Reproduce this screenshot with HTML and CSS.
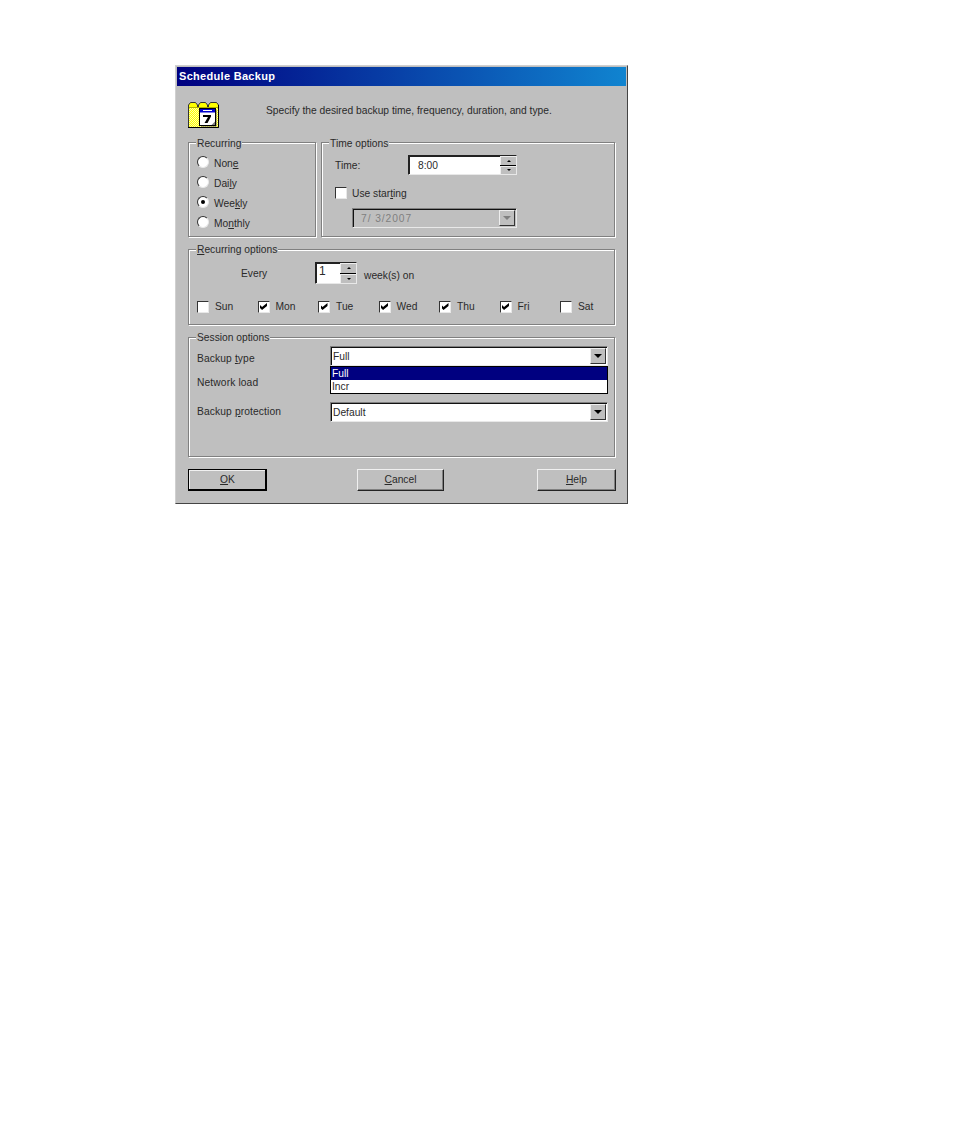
FILE: index.html
```
<!DOCTYPE html>
<html lang="en">
<head>
<meta charset="utf-8">
<title>Schedule Backup</title>
<link rel="stylesheet" href="styles.css">
</head>
<body>
<div class="window">
  <div class="titlebar">Schedule Backup</div>
  <div class="content">
    <div class="intro">
      <svg class="cal-icon" width="32" height="28" viewBox="0 0 32 28">
        <defs>
          <pattern id="dither" width="2" height="2" patternUnits="userSpaceOnUse">
            <rect width="2" height="2" fill="#ffff00"/>
            <rect width="1" height="1" fill="#ffffb0"/>
            <rect x="1" y="1" width="1" height="1" fill="#ffffb0"/>
          </pattern>
        </defs>
        <path d="M0.5 27.5 V5 L2.5 2.5 H7.5 L9.5 5 V7 H10.5 V5 L12.5 2.5 H17.5 L19.5 5 V7 H20.5 V5 L22.5 2.5 H28.5 L30.5 5 V27.5 Z" fill="#ffff00" stroke="#333" stroke-width="1"/>
        <rect x="1" y="8" width="29" height="19" fill="url(#dither)"/>
        <path d="M1 7.5 H30" stroke="#b0b000" stroke-width="1"/>
        <path d="M0 27.5 H30.5 V5" fill="none" stroke="#000" stroke-width="1"/>
        <rect x="13" y="10" width="15.5" height="16.5" fill="#666"/>
        <rect x="11.5" y="8.5" width="16" height="17" fill="#fff" stroke="#000" stroke-width="1"/>
        <rect x="12" y="9" width="15" height="3.5" fill="#0000d0"/>
        <rect x="15" y="10" width="9" height="1" fill="#fff"/>
        <path d="M15 15 H23 V16.5 L19.5 23 H16.5 L20 17 H15 Z" fill="#000"/>
        <path d="M23.5 25 L27 21.5 V25 Z" fill="#808080"/>
      </svg>
      <p class="intro-text">Specify the desired backup time, frequency, duration, and type.</p>
    </div>

    <div class="top-row">
      <section class="group recurring">
        <span class="legend low">Recurring</span>
        <div class="radio-list">
          <label class="opt"><span class="radio"></span>Non<u>e</u></label>
          <label class="opt"><span class="radio"></span>Dai<u>l</u>y</label>
          <label class="opt"><span class="radio on"></span>Wee<u>k</u>ly</label>
          <label class="opt"><span class="radio"></span>Mo<u>n</u>thly</label>
        </div>
      </section>
      <section class="group time-options">
        <span class="legend low">Time options</span>
        <div class="time-row">
          <span class="time-label">Time:</span>
          <div class="spin-field time-field">
            <span class="spin-value">8:00</span>
            <span class="spin"><span class="spin-btn"><i class="up"></i></span><span class="spin-btn"><i class="down"></i></span></span>
          </div>
        </div>
        <label class="opt start-row"><span class="check"></span>Use star<u>t</u>ing</label>
        <div class="combo date-combo disabled"><span class="combo-value">7/ 3/2007</span><span class="combo-btn"><i class="down big"></i></span></div>
      </section>
    </div>

    <section class="group recurring-options">
      <span class="legend"><u>R</u>ecurring options</span>
      <div class="every-row">
        <span class="every-label">Every</span>
        <div class="spin-field every-field">
          <span class="spin-value">1</span>
          <span class="spin"><span class="spin-btn"><i class="up"></i></span><span class="spin-btn"><i class="down"></i></span></span>
        </div>
        <span class="every-unit">week(s) on</span>
      </div>
      <div class="days">
        <label class="opt day"><span class="check"></span>Sun</label>
        <label class="opt day"><span class="check on"></span>Mon</label>
        <label class="opt day"><span class="check on"></span>Tue</label>
        <label class="opt day"><span class="check on"></span>Wed</label>
        <label class="opt day"><span class="check on"></span>Thu</label>
        <label class="opt day"><span class="check on"></span>Fri</label>
        <label class="opt day"><span class="check"></span>Sat</label>
      </div>
    </section>

    <section class="group session-options">
      <span class="legend">Session options</span>
      <div class="session-grid">
        <span class="field-label lift">Backup <u>t</u>ype</span>
        <div class="combo-wrap">
          <div class="combo"><span class="combo-value">Full</span><span class="combo-btn"><i class="down big"></i></span></div>
          <ul class="dropdown">
            <li class="selected">Full</li>
            <li>Incr</li>
          </ul>
        </div>
        <span class="field-label lift2">Network load</span>
        <div class="combo"><span class="combo-value"></span><span class="combo-btn"><i class="down big"></i></span></div>
        <span class="field-label lift3">Backup <u>p</u>rotection</span>
        <div class="combo"><span class="combo-value">Default</span><span class="combo-btn"><i class="down big"></i></span></div>
      </div>
    </section>

    <div class="buttons">
      <button class="btn default" type="button"><u>O</u>K</button>
      <button class="btn cancel" type="button"><u>C</u>ancel</button>
      <button class="btn help" type="button"><u>H</u>elp</button>
    </div>
  </div>
</div>
</body>
</html>
```

FILE: styles.css
```
* { box-sizing: border-box; }
html, body { margin: 0; padding: 0; background: #fff; }
body {
  padding: 65px 0 0 175px;
  height: 1145px;
  overflow: hidden;
  font-family: "Liberation Sans", Arial, sans-serif;
  font-size: 10.25px;
  color: #2a2a2a;
}
u { text-underline-offset: 1px; }

.window {
  width: 453px;
  height: 439px;
  background: #bfbfbf;
  border: 1px solid;
  border-color: #d0d0d0 #444 #444 #d0d0d0;
  padding: 1px;
  display: flex;
  flex-direction: column;
}
.titlebar {
  height: 19px;
  padding-left: 2px;
  line-height: 19px;
  font-size: 11px;
  font-weight: bold;
  letter-spacing: 0.3px;
  color: #fff;
  background: linear-gradient(to right, #000080, #1084d0);
}
.content {
  padding: 14px 11px 0;
  display: flex;
  flex-direction: column;
}
.intro {
  height: 28px;
  display: flex;
  align-items: center;
  margin-bottom: 14px;
}
.cal-icon { flex: none; display: block; }
.intro-text { margin: 0 0 8px 46px; white-space: nowrap; }

.group {
  position: relative;
  border: 1px solid #808080;
  box-shadow: 1px 1px 0 #fff, inset 1px 1px 0 #fff;
}
.legend {
  position: absolute;
  top: -7px;
  left: 7px;
  padding: 0 1px;
  line-height: 13px;
  background: #bfbfbf;
  white-space: nowrap;
}
.legend.low { top: -6px; }

.top-row { display: flex; gap: 5px; height: 95px; margin-bottom: 12px; }
.recurring { width: 128px; padding: 10px 0 0 8px; }
.radio-list { display: grid; grid-auto-rows: 20px; }
.opt { display: flex; align-items: center; white-space: nowrap; }
.radio {
  width: 12px; height: 12px;
  margin: -2px 5px 0 0;
  border-radius: 50%;
  background: #fff;
  border: 1px solid;
  border-color: #333 #e8e8e8 #e8e8e8 #333;
  position: relative;
  flex: none;
}
.radio.on::after {
  content: "";
  position: absolute;
  left: 3px; top: 3px;
  width: 4px; height: 4px;
  border-radius: 50%;
  background: #000;
}
.check {
  width: 12px; height: 12px;
  margin-right: 5px;
  flex: none;
  background: #fff;
  border: 1px solid;
  border-color: #333 #e8e8e8 #e8e8e8 #333;
  position: relative;
}
.check.on::after {
  content: "";
  position: absolute;
  left: 1.5px; top: 1.5px;
  width: 7px; height: 7px;
  background: #000;
  clip-path: polygon(0 29%, 29% 57%, 100% 0, 100% 43%, 29% 100%, 0 71%);
}

.time-options { width: 294px; padding: 12px 0 0 13px; }
.time-row { display: flex; align-items: center; height: 20px; }
.time-label { width: 73px; }
.spin-field {
  display: flex;
  align-items: center;
  background: #fff;
  border: 1px solid;
  border-color: #222 #e8e8e8 #e8e8e8 #222;
  box-shadow: inset 1px 1px 0 #222;
}
.time-field { width: 109px; height: 20px; }
.time-field .spin-value { flex: 1; padding-left: 9px; }
.spin { display: flex; flex-direction: column; width: 16px; height: 100%; flex: none; background: #000; gap: 1px; }
.spin-btn {
  flex: 1;
  display: flex;
  align-items: center;
  justify-content: center;
  background: #bfbfbf;
  border-top: 1px solid #eee;
  border-left: 1px solid #eee;
}
.up, .down { display: block; width: 0; height: 0; border-style: solid; border-color: transparent; }
.up { border-width: 0 2px 2px; border-bottom-color: #000; }
.down { border-width: 2px 2px 0; border-top-color: #000; }
.down.big { border-width: 4px 4px 0; }

.start-row { height: 12px; margin-top: 12px; }
.combo {
  display: flex;
  align-items: center;
  height: 20px;
  background: #fff;
  border: 1px solid;
  border-color: #808080 #e8e8e8 #e8e8e8 #808080;
  box-shadow: inset 1px 1px 0 #111;
  padding-right: 1px;
}
.combo-value { flex: 1; padding-left: 2px; }
.combo-btn {
  width: 16px; height: 16px;
  flex: none;
  display: flex;
  align-items: center;
  justify-content: center;
  background: #bfbfbf;
  border: 1px solid;
  border-color: #eee #333 #333 #eee;
}
.date-combo { width: 165px; margin: 9px 0 0 17px; }
.date-combo.disabled { background: #bfbfbf; }
.date-combo .combo-value { color: #808080; padding-left: 8px; letter-spacing: 0.93px; }
.date-combo .down { border-top-color: #808080; }

.recurring-options { height: 76px; margin-bottom: 12px; padding: 12px 0 0 8px; }
.every-row { display: flex; align-items: center; height: 22px; }
.every-label { width: 118px; padding: 0 0 0 44px; }
.every-field { width: 42px; height: 22px; }
.every-field .spin-value { flex: 1; padding-left: 3px; font-size: 12px; margin-top: -4px; }
.every-unit { margin-left: 7px; padding-top: 4px; }
.days { display: grid; grid-template-columns: repeat(7, 60.5px); margin-top: 16px; }
.day { height: 12px; }
.day .check { margin: 1px 6px 0 0; }

.session-options { height: 120px; margin-bottom: 12px; padding: 8px 7px 0 8px; }
.session-grid { display: grid; grid-template-columns: 133px 278px; grid-auto-rows: 20px; row-gap: 8px; align-items: center; }
.field-label { white-space: nowrap; letter-spacing: 0.12px; }
.lift { padding-top: 4px; }
.lift2 { padding-bottom: 4px; }
.lift3 { padding-bottom: 2px; }
.combo-wrap { position: relative; height: 20px; }
.dropdown {
  position: absolute;
  left: 0; top: 20px;
  width: 278px;
  margin: 0;
  padding: 0;
  list-style: none;
  background: #fff;
  border: 1px solid #000;
  z-index: 1;
}
.dropdown li { height: 13px; line-height: 13px; padding-left: 1px; }
.dropdown .selected { background: #000080; color: #fff; }

.buttons { display: flex; width: 428px; }
.btn {
  width: 79px;
  height: 22px;
  padding: 0 0 2px;
  font: inherit;
  color: inherit;
  background: #bfbfbf;
  border: 1px solid;
  border-color: #f0f0f0 #222 #222 #f0f0f0;
  box-shadow: inset -1px -1px 0 #808080;
}
.btn.default { border: 1px solid #000; box-shadow: inset -1px -1px 0 #000, inset 1px 1px 0 #f0f0f0; }
.btn.cancel { width: 87px; margin-left: 90px; }
.btn.help { margin-left: 93px; }
```
